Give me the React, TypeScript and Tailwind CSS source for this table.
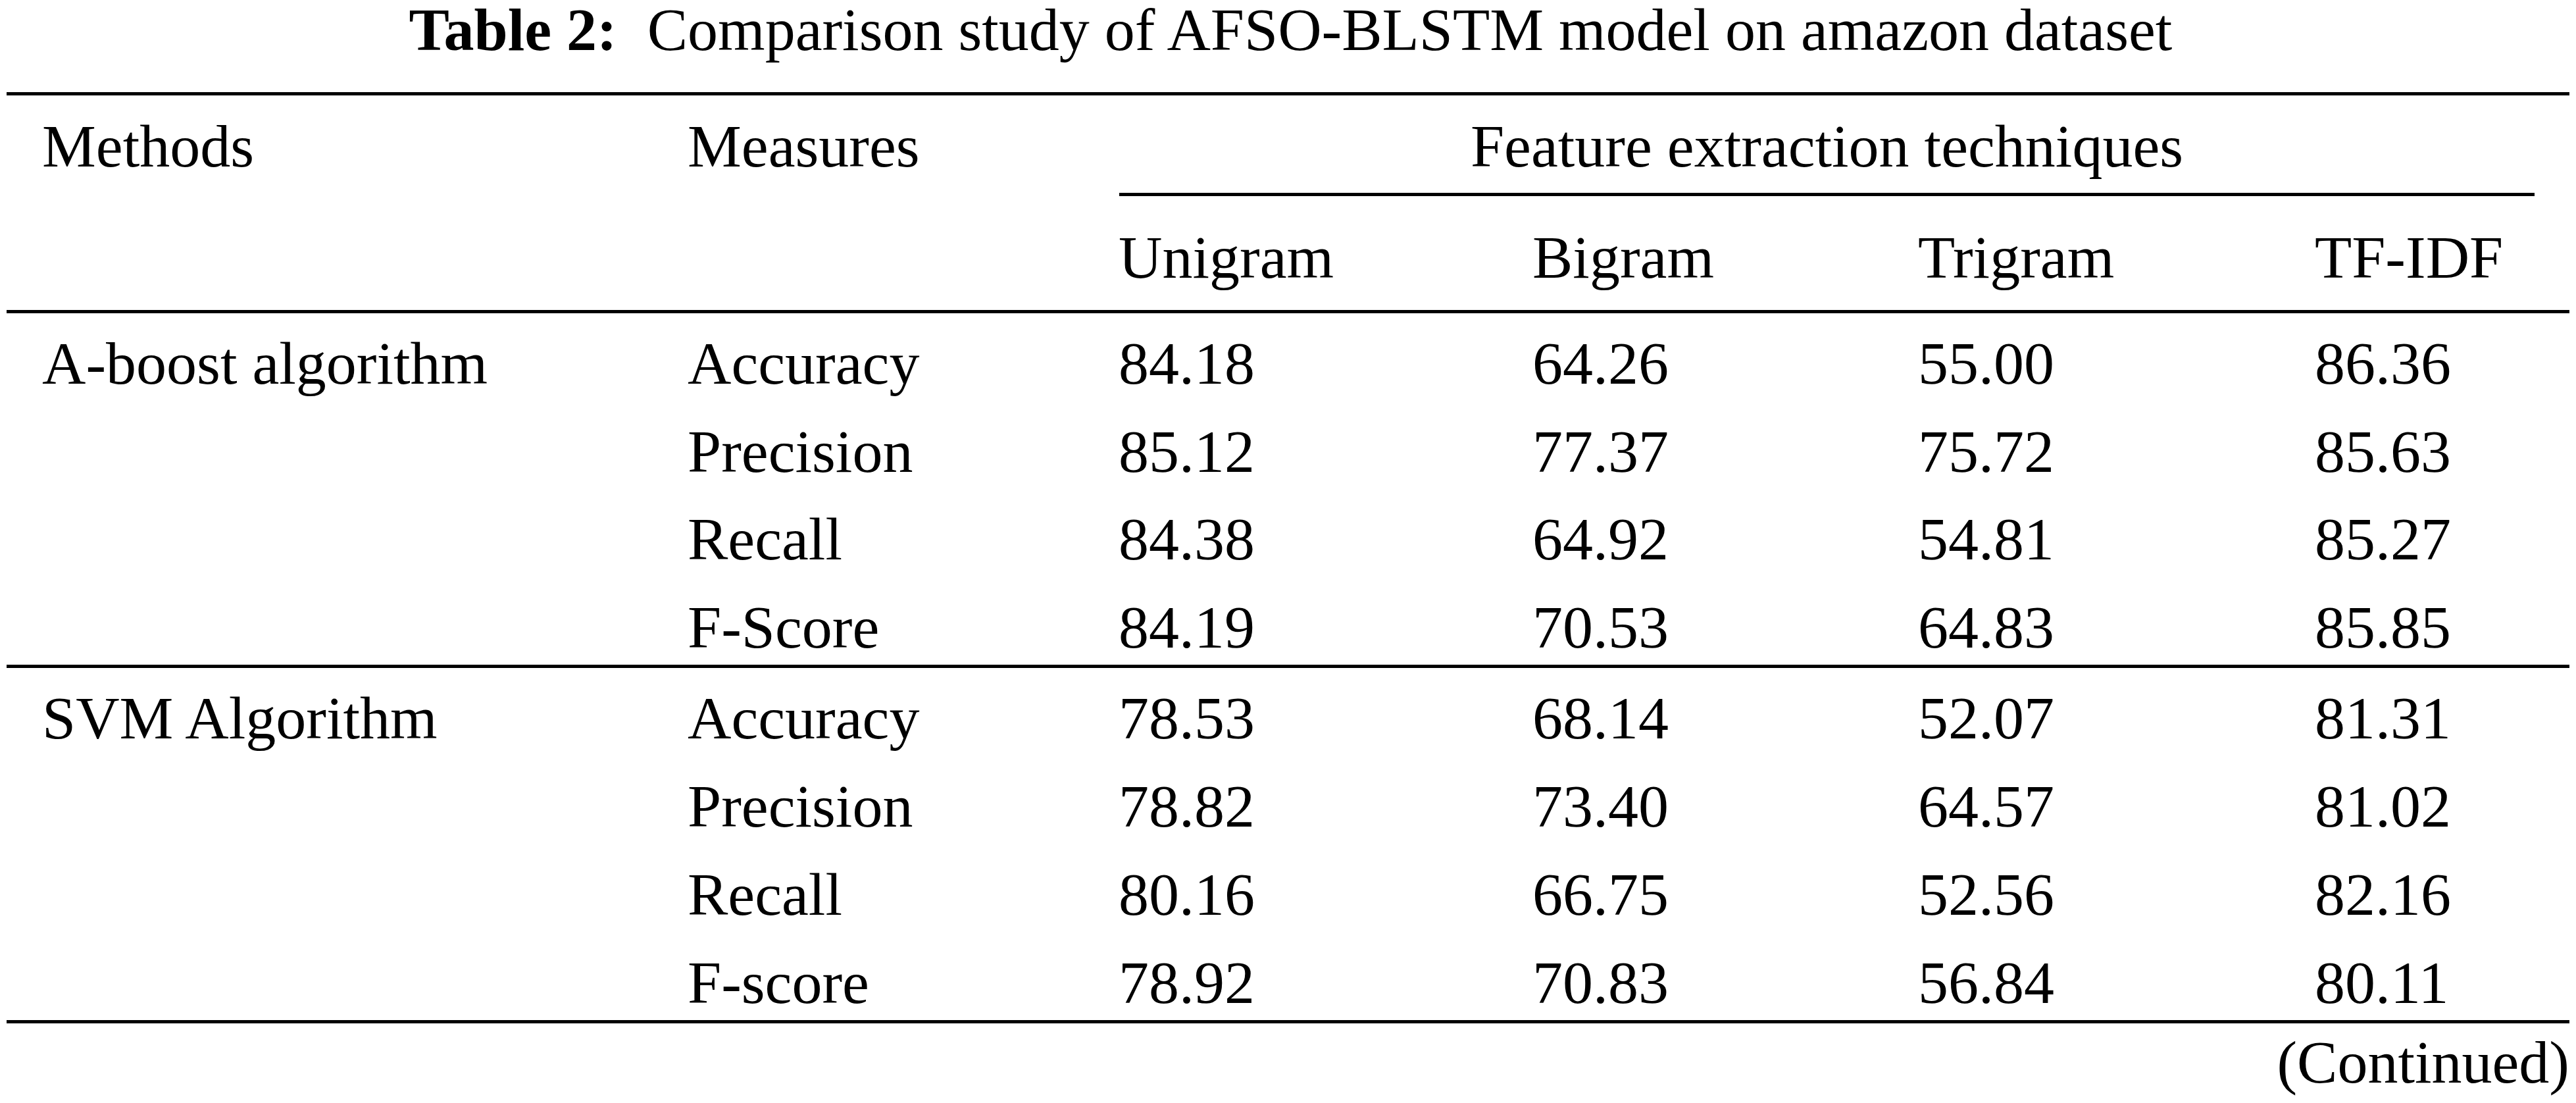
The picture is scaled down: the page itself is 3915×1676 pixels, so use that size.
const groups = [
  {
    method: 'A-boost algorithm',
    rows: [
      { measure: 'Accuracy', values: ['84.18', '64.26', '55.00', '86.36'] },
      { measure: 'Precision', values: ['85.12', '77.37', '75.72', '85.63'] },
      { measure: 'Recall', values: ['84.38', '64.92', '54.81', '85.27'] },
      { measure: 'F-Score', values: ['84.19', '70.53', '64.83', '85.85'] },
    ],
  },
  {
    method: 'SVM Algorithm',
    rows: [
      { measure: 'Accuracy', values: ['78.53', '68.14', '52.07', '81.31'] },
      { measure: 'Precision', values: ['78.82', '73.40', '64.57', '81.02'] },
      { measure: 'Recall', values: ['80.16', '66.75', '52.56', '82.16'] },
      { measure: 'F-score', values: ['78.92', '70.83', '56.84', '80.11'] },
    ],
  },
];

const techniques = ['Unigram', 'Bigram', 'Trigram', 'TF-IDF'];

function Rule() {
  return <div className="h-[5px] bg-black" />;
}

function Cells({ first, second, values }: { first: string; second: string; values: string[] }) {
  return (
    <div className="flex h-[100px] leading-[100px] pl-[54px] whitespace-nowrap">
      <div className="w-[981px]">{first}</div>
      <div className="w-[655px]">{second}</div>
      <div className="w-[629px]">{values[0]}</div>
      <div className="w-[586px]">{values[1]}</div>
      <div className="w-[603px]">{values[2]}</div>
      <div className="flex-1">{values[3]}</div>
    </div>
  );
}

export default function App() {
  return (
    <div className="w-[3915px] h-[1676px] bg-white text-black text-[92px] font-['Liberation_Serif','Times_New_Roman',serif]">
      {/* Caption */}
      <div className="h-[90px] leading-[90px] text-center whitespace-nowrap pl-[8px]">
        <span className="font-bold">Table 2:</span>
        <span className="ml-[0.5em]">Comparison study of AFSO-BLSTM model on amazon dataset</span>
      </div>

      <div className="ml-[10px] w-[3895px] mt-[49.5px]">
        <Rule />

        {/* Header */}
        <div className="pt-[27px]">
          <div className="flex h-[100px] leading-[100px] pl-[54px] whitespace-nowrap">
            <div className="w-[981px]">Methods</div>
            <div className="w-[656px]">Measures</div>
            <div className="w-[2151px] text-center">Feature extraction techniques</div>
          </div>
          <div className="ml-[1691px] w-[2151px] h-[5px] bg-black mt-[21.2px]" />
          <div className="mt-[43px]">
            <Cells first="" second="" values={techniques} />
          </div>
          <div className="h-[30px]" />
        </div>
        <Rule />

        {groups.map((group) => (
          <div key={group.method}>
            <div className="flex flex-col gap-y-[33.75px] pt-[26.2px] pb-[7px]">
              {group.rows.map((row, i) => (
                <Cells
                  key={row.measure}
                  first={i === 0 ? group.method : ''}
                  second={row.measure}
                  values={row.values}
                />
              ))}
            </div>
            <Rule />
          </div>
        ))}

        <div className="pt-[9px] h-[100px] leading-[100px] text-right whitespace-nowrap">
          (Continued)
        </div>
      </div>
    </div>
  );
}
